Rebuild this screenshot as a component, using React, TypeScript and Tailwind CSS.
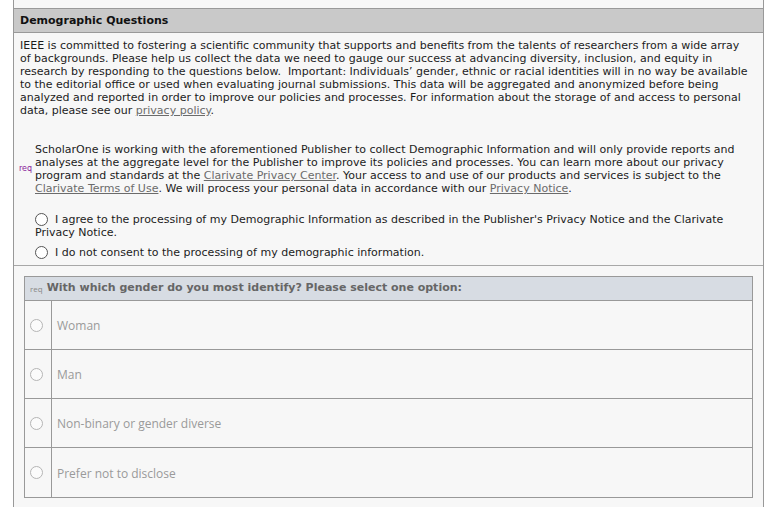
import React from "react";

const verdana = "font-['DejaVu_Sans','Verdana',sans-serif]";

function Radio({ light }: { light?: boolean }) {
  return (
    <span
      className={
        light
          ? "inline-block w-[13px] h-[13px] rounded-full border border-[#b5b5b5] bg-[#fbfbfb] shrink-0"
          : "inline-block w-[13px] h-[13px] rounded-full border border-[#555] bg-white shrink-0"
      }
    />
  );
}

function Link({ children }: { children: React.ReactNode }) {
  return <span className="text-[#6b6b6b] underline underline-offset-[1px]">{children}</span>;
}

const options = ["Woman", "Man", "Non-binary or gender diverse", "Prefer not to disclose"];

export default function App() {
  return (
    <div className="w-[779px] h-[507px] bg-white overflow-hidden">
      <div className={`ml-[13px] w-[751px] h-[507px] border-x border-[#999] bg-[#f7f7f7] ${verdana}`}>
        <div className="h-[8px]" />
        <div className="h-[25px] border-y border-[#999] bg-[#c9c9c9] flex items-center pl-[6px] pt-[1px] text-[11px] font-bold text-[#111]">
          Demographic Questions
        </div>
        <div className="pl-[6px] pt-[6px] text-[11px] leading-[13px] text-[#1c1c1c] whitespace-nowrap">
          IEEE is committed to fostering a scientific community that supports and benefits from the talents of researchers from a wide array
          <br />
          of backgrounds. Please help us collect the data we need to gauge our success at advancing diversity, inclusion, and equity in
          <br />
          research by responding to the questions below.&nbsp; Important: Individuals’ gender, ethnic or racial identities will in no way be available
          <br />
          to the editorial office or used when evaluating journal submissions. This data will be aggregated and anonymized before being
          <br />
          analyzed and reported in order to improve our policies and processes. For information about the storage of and access to personal
          <br />
          data, please see our <Link>privacy policy</Link>.
        </div>
        <div className="flex items-center mt-[26px]">
          <div className="w-[21px] pl-[5px] text-[8px] text-[#8a1a9a] leading-none">req</div>
          <div className="text-[11px] leading-[13px] text-[#1c1c1c] whitespace-nowrap">
            ScholarOne is working with the aforementioned Publisher to collect Demographic Information and will only provide reports and
            <br />
            analyses at the aggregate level for the Publisher to improve its policies and processes. You can learn more about our privacy
            <br />
            program and standards at the <Link>Clarivate Privacy Center</Link>. Your access to and use of our products and services is subject to the
            <br />
            <Link>Clarivate Terms of Use</Link>. We will process your personal data in accordance with our <Link>Privacy Notice</Link>.
          </div>
        </div>
        <div className="pl-[21px] mt-[18px] text-[11px] leading-[13px] text-[#1c1c1c] whitespace-nowrap">
          <div className="flex items-center">
            <Radio />
            <span className="ml-[7px]">
              I agree to the processing of my Demographic Information as described in the Publisher's Privacy Notice and the Clarivate
            </span>
          </div>
          <div>Privacy Notice.</div>
          <div className="flex items-center mt-[7px]">
            <Radio />
            <span className="ml-[7px]">I do not consent to the processing of my demographic information.</span>
          </div>
        </div>
        <div className="mt-[6px] border-t border-[#a8a8a8] pt-[10px] px-[10px]">
          <div className="border border-[#999] bg-[#f7f7f7]">
            <div className="h-[24px] bg-[#d7dce3] border-b border-[#999] flex items-center pl-[5px]">
              <span className="font-['Open_Sans',sans-serif] text-[8px] text-[#888] mr-[4px]">req</span>
              <span className="text-[11px] font-bold text-[#666]">
                With which gender do you most identify? Please select one option:
              </span>
            </div>
            {options.map((o, i) => (
              <div
                key={o}
                className={`flex h-[49px] ${i < options.length - 1 ? "border-b border-[#999]" : ""}`}
              >
                <div className="w-[27px] border-r border-[#999] flex items-center pl-[5px]">
                  <Radio light />
                </div>
                <div className="flex items-center pl-[5px] pt-[2px] font-['Open_Sans',sans-serif] text-[12px] text-[#9a9a9a]">
                  {o}
                </div>
              </div>
            ))}
          </div>
        </div>
      </div>
    </div>
  );
}
